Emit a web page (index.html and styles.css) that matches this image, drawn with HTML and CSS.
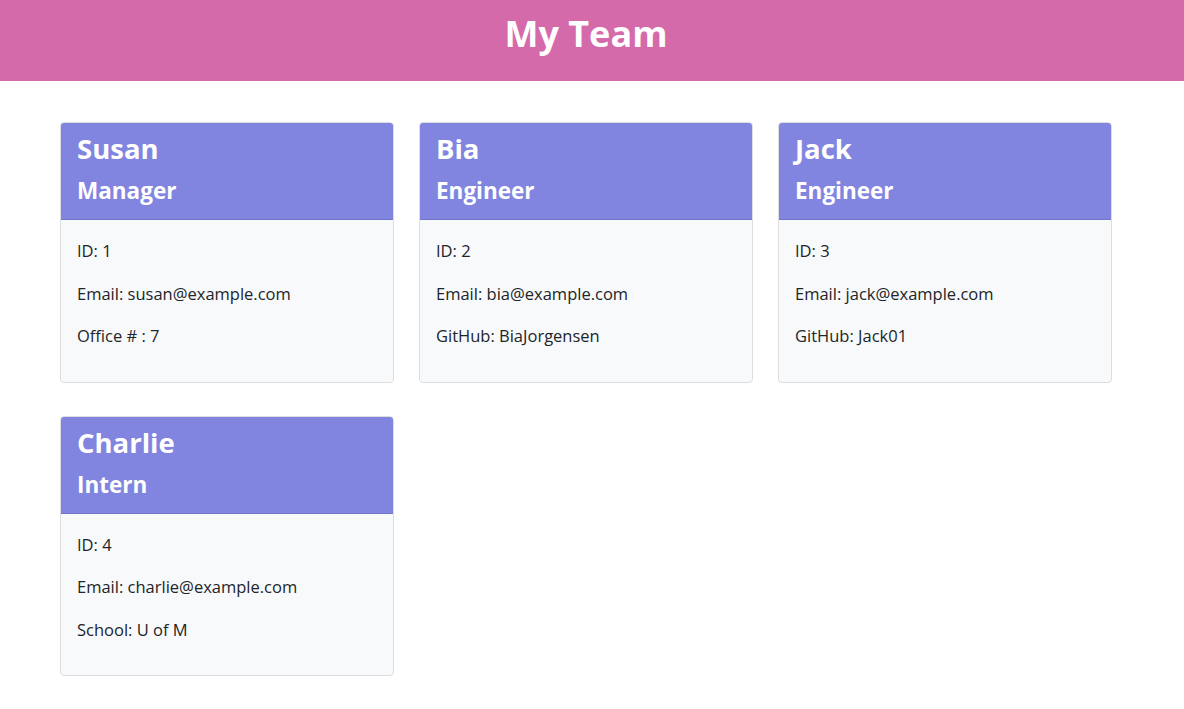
FILE: index.html
```html
<!DOCTYPE html>
<html lang="en">
<head>
<meta charset="utf-8">
<title>My Team</title>
<link rel="stylesheet" href="styles.css">
</head>
<body>
<header class="banner">
  <h1 class="banner-title">My Team</h1>
</header>
<main class="team">
  <div class="card">
    <div class="card-header">
      <h2 class="card-name">Susan</h2>
      <h3 class="card-role">Manager</h3>
    </div>
    <div class="card-body">
      <p class="card-line">ID: 1</p>
      <p class="card-line">Email: susan@example.com</p>
      <p class="card-line">Office # : 7</p>
    </div>
  </div>
  <div class="card">
    <div class="card-header">
      <h2 class="card-name">Bia</h2>
      <h3 class="card-role">Engineer</h3>
    </div>
    <div class="card-body">
      <p class="card-line">ID: 2</p>
      <p class="card-line">Email: bia@example.com</p>
      <p class="card-line">GitHub: BiaJorgensen</p>
    </div>
  </div>
  <div class="card">
    <div class="card-header">
      <h2 class="card-name">Jack</h2>
      <h3 class="card-role">Engineer</h3>
    </div>
    <div class="card-body">
      <p class="card-line">ID: 3</p>
      <p class="card-line">Email: jack@example.com</p>
      <p class="card-line">GitHub: Jack01</p>
    </div>
  </div>
  <div class="card">
    <div class="card-header">
      <h2 class="card-name">Charlie</h2>
      <h3 class="card-role">Intern</h3>
    </div>
    <div class="card-body">
      <p class="card-line">ID: 4</p>
      <p class="card-line">Email: charlie@example.com</p>
      <p class="card-line">School: U of M</p>
    </div>
  </div>
</main>
</body>
</html>
```

FILE: styles.css
```css
* { box-sizing: border-box; }

body {
  margin: 0;
  font-family: "Open Sans", "Noto Sans", "Liberation Sans", sans-serif;
  color: #212529;
  background: #ffffff;
}

.banner {
  height: 81px;
  background: #d56aab;
  padding: 12px 12px 0 0;
  text-align: center;
}

.banner-title {
  margin: 0;
  font-size: 36px;
  font-weight: 700;
  color: #ffffff;
  line-height: 44px;
}

.team {
  display: grid;
  grid-template-columns: repeat(3, 334px);
  column-gap: 25px;
  row-gap: 33px;
  padding: 41px 0 0 60px;
}

.card {
  border: 1px solid #dcdde0;
  border-radius: 4px;
  background: #f8f9fa;
  overflow: hidden;
}

.card-header {
  background: #8185e0;
  border-bottom: 1px solid #7276c8;
  padding: 9px 16px 13px;
  color: #ffffff;
}

.card-name {
  margin: 0 0 10px;
  font-size: 27.5px;
  font-weight: 700;
  line-height: 34px;
}

.card-role {
  margin: 0;
  font-size: 22.5px;
  font-weight: 700;
  line-height: 30px;
}

.card-body {
  padding: 19px 16px 15px;
}

.card-line {
  margin: 0 0 18.5px;
  font-size: 16.5px;
  line-height: 24px;
}
```
